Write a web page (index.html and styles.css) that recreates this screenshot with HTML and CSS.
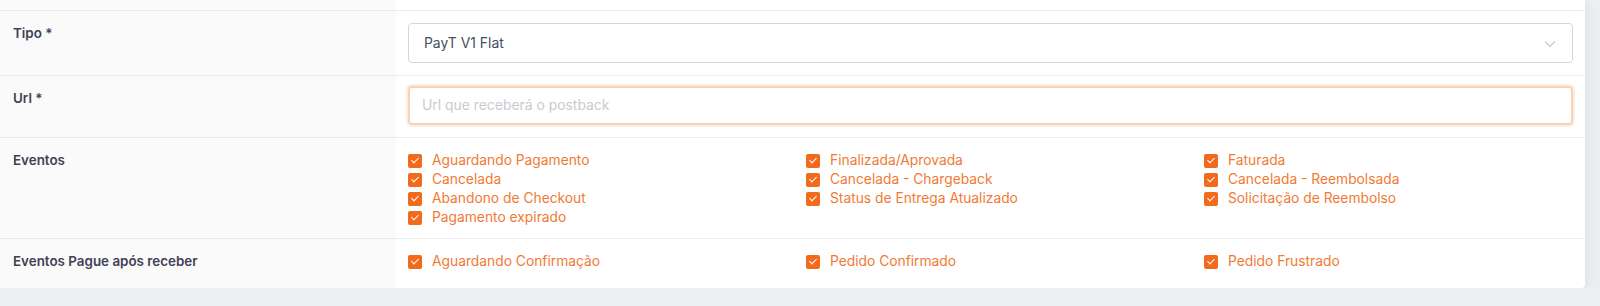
FILE: index.html
```html
<!DOCTYPE html>
<html lang="pt-BR">
<head>
<meta charset="utf-8">
<title>Postback</title>
<link rel="stylesheet" href="styles.css">
</head>
<body>
<div class="card">
  <div class="row row-top">
    <div class="label"></div>
    <div class="field"></div>
  </div>
  <div class="row">
    <div class="label">Tipo *</div>
    <div class="field">
      <div class="select">
        <span>PayT V1 Flat</span>
        <svg class="chev" width="12" height="8" viewBox="0 0 12 8"><path d="M1 1.5 L6 6.5 L11 1.5" fill="none" stroke="#c4c7cf" stroke-width="1.1"/></svg>
      </div>
    </div>
  </div>
  <div class="row">
    <div class="label">Url *</div>
    <div class="field">
      <div class="input">Url que receberá o postback</div>
    </div>
  </div>
  <div class="row">
    <div class="label">Eventos</div>
    <div class="field field-checks">
      <div class="checks">
        <div class="col">
          <div class="chk"><span class="box"></span>Aguardando Pagamento</div>
          <div class="chk"><span class="box"></span>Cancelada</div>
          <div class="chk"><span class="box"></span>Abandono de Checkout</div>
          <div class="chk"><span class="box"></span>Pagamento expirado</div>
        </div>
        <div class="col">
          <div class="chk"><span class="box"></span>Finalizada/Aprovada</div>
          <div class="chk"><span class="box"></span>Cancelada - Chargeback</div>
          <div class="chk"><span class="box"></span>Status de Entrega Atualizado</div>
        </div>
        <div class="col">
          <div class="chk"><span class="box"></span>Faturada</div>
          <div class="chk"><span class="box"></span>Cancelada - Reembolsada</div>
          <div class="chk"><span class="box"></span>Solicitação de Reembolso</div>
        </div>
      </div>
    </div>
  </div>
  <div class="row row-last">
    <div class="label">Eventos Pague após receber</div>
    <div class="field field-checks">
      <div class="checks">
        <div class="col"><div class="chk"><span class="box"></span>Aguardando Confirmação</div></div>
        <div class="col"><div class="chk"><span class="box"></span>Pedido Confirmado</div></div>
        <div class="col"><div class="chk"><span class="box"></span>Pedido Frustrado</div></div>
      </div>
    </div>
  </div>
</div>
</body>
</html>
```
FILE: styles.css
```css
html, body {
  margin: 0;
  padding: 0;
  background: #eceef2;
  font-family: Inter, "Noto Sans", sans-serif;
  font-size: 13px;
  line-height: 19px;
}
.card {
  width: 1585px;
  height: 288px;
  background: #ffffff;
  box-shadow: 0 4px 12px rgba(40, 50, 70, 0.10);
  border-radius: 0 0 4px 0;
  display: flex;
  flex-direction: column;
  overflow: hidden;
}
.row {
  display: grid;
  grid-template-columns: 396px 1fr;
  border-top: 1px solid #e9ebf0;
}
.row-top {
  border-top: none;
  height: 10px;
}
.row-last {
  flex: 1;
}
.label {
  background: #fafafa;
  padding: 13px 13px 11px;
  font-weight: 600;
  font-size: 13.4px;
  color: #3f4254;
}
.row-top .label, .row-top .field { padding: 0; }
.field {
  padding: 12px;
}
.field-checks {
  padding: 13px 12px 11px;
}
.select {
  height: 38px;
  border: 1px solid #d3d6dc;
  border-radius: 4px;
  display: flex;
  align-items: center;
  justify-content: space-between;
  padding: 0 16px 0 15px;
  color: #464e5f;
  font-size: 13.9px;
}
.chev { display: block; margin-top: 1px; }
.input {
  height: 35px;
  margin-top: -2px;
  border: 2px solid #f8d3b6;
  box-shadow: 0 0 0 2px #fdeee3;
  border-radius: 4px;
  display: flex;
  align-items: center;
  padding: 0 12px;
  color: #c9cbd1;
  font-size: 13.9px;
}
.checks {
  display: grid;
  grid-template-columns: 398px 398px 1fr;
}
.chk {
  display: flex;
  align-items: center;
  color: #f07a34;
  height: 19px;
  font-size: 13.8px;
}
.box {
  width: 14px;
  height: 14px;
  border-radius: 2px;
  background: #f26a1b;
  margin-right: 10px;
  position: relative;
  flex: none;
}
.box::after {
  content: "";
  position: absolute;
  left: 4.5px;
  top: 2.5px;
  width: 3px;
  height: 6px;
  border: solid #ffffff;
  border-width: 0 1.3px 1.3px 0;
  transform: rotate(45deg);
}
```
